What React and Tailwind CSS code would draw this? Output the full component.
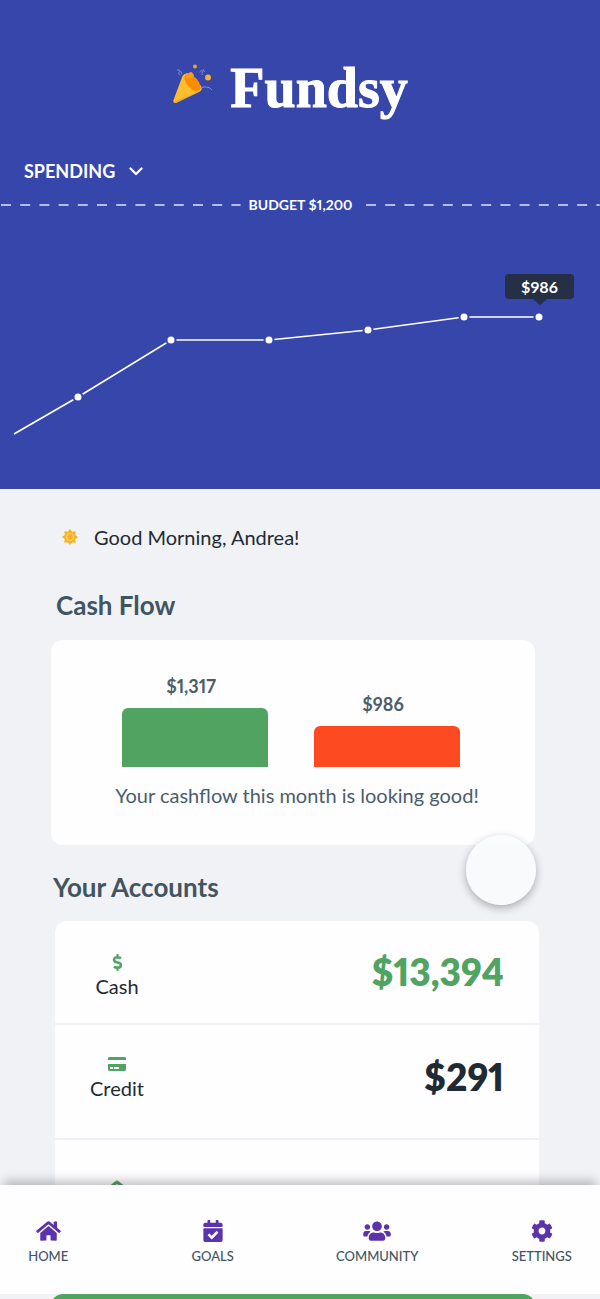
import React from "react";
import {
  FaHome,
  FaCalendarCheck,
  FaUsers,
  FaCog,
  FaDollarSign,
  FaCreditCard,
} from "react-icons/fa";

const points = [
  [14, 219],
  [78, 182],
  [171, 125],
  [269, 125],
  [368, 115],
  [464, 102],
  [539, 102],
];

const navItems = [
  { label: "HOME", Icon: FaHome, size: "w-[25px]" },
  { label: "GOALS", Icon: FaCalendarCheck, size: "w-5" },
  { label: "COMMUNITY", Icon: FaUsers, size: "w-7" },
  { label: "SETTINGS", Icon: FaCog, size: "w-[22px]" },
];

function PartyPopper() {
  return (
    <svg viewBox="0 0 42 42" className="size-[42px]" aria-hidden="true">
      <path d="M1.500 36 L10.500 12 Q13 8.500 18 10 L29 22 Q31 25 28 27.500 L4 39 Q0.500 39.500 1.500 36Z" fill="#fdbd2c" />
      <path d="M2.500 38 L28 27 L4 39Z" fill="#d9a63c" />
      <ellipse cx="20.500" cy="18.500" rx="5.500" ry="10.500" transform="rotate(-42 20.500 18.500)" fill="#fb8c00" />
      <path d="M13 11 q1 -3 3.500 -1.500 q3 -3 4.500 0.500 q2 1 0 3 L15 15Z" fill="#f9a01b" />
      <circle cx="23" cy="2.500" r="2" fill="#f9a01b" />
      <circle cx="36" cy="13.500" r="3" fill="#f9b02b" />
      <path d="M5 6 q3 -1 2.500 1.500 q-2 3 1 3.500 M8.500 7 l1.500 3 M27.500 8 q3 -3 3 0 q-2 3 0.500 2.500 M31 5 l1.500 3 M28.500 24 q3 -1.500 6 -1 q3 0 5.500 3" fill="none" stroke="#858dc9" strokeWidth="1" />
    </svg>
  );
}

function Sun() {
  return (
    <svg viewBox="0 0 32 32" className="size-4" aria-hidden="true">
      <g fill="#fbb01c">
        <path d="M16 0 L20.500 6 H11.500Z" />
        <path d="M16 0 L20.500 6 H11.500Z" transform="rotate(45 16 16)" />
        <path d="M16 0 L20.500 6 H11.500Z" transform="rotate(90 16 16)" />
        <path d="M16 0 L20.500 6 H11.500Z" transform="rotate(135 16 16)" />
        <path d="M16 0 L20.500 6 H11.500Z" transform="rotate(180 16 16)" />
        <path d="M16 0 L20.500 6 H11.500Z" transform="rotate(225 16 16)" />
        <path d="M16 0 L20.500 6 H11.500Z" transform="rotate(270 16 16)" />
        <path d="M16 0 L20.500 6 H11.500Z" transform="rotate(315 16 16)" />
        <circle cx="16" cy="16" r="11" />
      </g>
      <circle cx="16" cy="16" r="7" fill="#fbb01c" stroke="#fde3a0" strokeWidth="1.800" />
    </svg>
  );
}

function HouseOutline() {
  return (
    <svg viewBox="0 0 18 18" className="size-[18px]" aria-hidden="true">
      <path d="M2 7.500 L9 2 L16 7.500 V16 H2Z" fill="none" stroke="currentColor" strokeWidth="3" strokeLinejoin="round" />
    </svg>
  );
}

function Dashes({ className }) {
  return (
    <svg className={className} height="2" aria-hidden="true">
      <line x1="0" y1="1" x2="100%" y2="1" stroke="#dfe2f6" strokeWidth="1.500" strokeDasharray="10 9.200" />
    </svg>
  );
}

function SpendingChart() {
  return (
    <div className="relative">
      <svg viewBox="0 0 600 274" className="block w-full" role="img" aria-label="Spending over time">
        <polyline points={points.map((p) => p.join(",")).join(" ")} fill="none" stroke="#fff" strokeWidth="1.700" />
        {points.slice(1).map(([x, y]) => (
          <circle key={x} cx={x} cy={y} r="4.500" fill="#fff" stroke="#3646ab" strokeWidth="2" />
        ))}
      </svg>
      <div className="absolute top-[59px] right-[26px] flex h-[25px] w-[69px] items-center justify-center rounded bg-[#252f45] text-base font-bold text-white">
        $986
        <span className="absolute top-full left-1/2 -translate-x-1/2 border-x-[7px] border-t-[6px] border-x-transparent border-t-[#252f45]" />
      </div>
    </div>
  );
}

function Account({ icon, label, amount, className }) {
  return (
    <li className={"flex items-start justify-between border-t-2 border-[#f0f1f4] pr-[35px] pl-5 first:border-t-0 " + className}>
      <div className="flex w-[84px] flex-col items-center gap-px text-xl leading-7 text-[#1f2a33]">
        <span className="text-[#51a362]">{icon}</span>
        {label}
      </div>
      {amount}
    </li>
  );
}

export default function App() {
  return (
    <div className="relative h-screen overflow-hidden bg-[#f0f2f6] font-[Lato,sans-serif] proportional-nums">
      <div className="h-full overflow-y-auto [scrollbar-width:none]">
        <header className="bg-[#3646ab] text-white">
          <div className="flex items-start justify-center gap-4 pt-16 pr-5">
            <PartyPopper />
            <h1 className="font-['Liberation_Serif',serif] text-[56px] leading-[48px] font-bold [-webkit-text-stroke:1px_white]">Fundsy</h1>
          </div>
          <div className="mt-[45px] flex items-center pl-6">
            <div className="relative flex items-center">
              <select aria-label="Chart" className="w-[124px] appearance-none bg-transparent text-lg leading-7 font-bold">
                <option>SPENDING</option>
              </select>
              <svg viewBox="0 0 14 9" className="pointer-events-none absolute right-[5px] h-[9px] w-3.5" aria-hidden="true">
                <path d="M1.500 1.500 L7 7 L12.500 1.500" fill="none" stroke="#fff" strokeWidth="2.300" strokeLinecap="round" strokeLinejoin="round" />
              </svg>
            </div>
          </div>
          <div className="mt-2.5 flex items-center pl-px">
            <Dashes className="w-2/5" />
            <span className="pr-3.5 pl-2 text-sm leading-5 font-bold whitespace-nowrap">BUDGET $1,200</span>
            <Dashes className="w-0 flex-1" />
          </div>
          <SpendingChart />
        </header>

        <main>
          <p className="flex items-center gap-4 pt-8 pl-[62px] text-xl leading-8 text-[#1f2a33]">
            <Sun />
            Good Morning, Andrea!
          </p>

          <section className="mr-[65px] ml-[51px]">
            <h2 className="mt-9 ml-[5px] text-[26px] leading-8 font-bold text-[#42545f]">Cash Flow</h2>
            <div className="mt-[19px] rounded-xl bg-[#fefdff] pt-8 pb-[34px] text-[#4a5d6b]">
              <div className="flex items-end gap-[46px] pr-[75px] pl-[71px] text-center text-lg leading-7 font-bold">
                <div className="flex-1">
                  <span className="pr-2">$1,317</span>
                  <div className="mt-2 h-[59px] rounded-t-md bg-[#51a362]" />
                </div>
                <div className="flex-1">
                  <span className="pr-2">$986</span>
                  <div className="mt-2 h-[41px] rounded-t-md bg-[#fd4a20]" />
                </div>
              </div>
              <p className="mt-3 pl-2 text-center text-xl leading-8 whitespace-nowrap">Your cashflow this month is looking good!</p>
            </div>
          </section>

          <section className="mr-[61px] ml-[55px]">
            <h2 className="mt-[26px] -ml-0.5 text-[26px] leading-8 font-bold text-[#42545f]">Your Accounts</h2>
            <ul className="mt-[18px] rounded-xl bg-[#fefdff]">
              <Account
                className="h-[102px] pt-[33px]"
                icon={<FaDollarSign size={17} />}
                label="Cash"
                amount={<strong className="text-[37px] leading-9 font-extrabold text-[#51a362]">$13,394</strong>}
              />
              <Account
                className="h-[115px] pt-[30px]"
                icon={<FaCreditCard size={18} />}
                label="Credit"
                amount={<strong className="pt-1 text-[37px] leading-9 font-extrabold text-[#1f2a33]">$291</strong>}
              />
              <Account
                className="h-[120px] pt-10"
                icon={<HouseOutline />}
                label=""
              />
            </ul>
          </section>

          <section className="mr-[65px] mb-32 ml-[51px]">
            <button aria-label="Add account" className="mt-9 block h-14 w-full rounded-xl bg-[#51a362]" />
          </section>
        </main>
      </div>

      <div className="absolute top-[835px] right-16 size-[70px] rounded-full bg-[#fafbfd]/90 shadow-[0_3px_8px_rgba(0,0,0,0.3)]" />

      <nav className="absolute inset-x-0 bottom-[5px] h-[109px] bg-[#fefdff] pt-[35px] shadow-[0_-8px_10px_-4px_rgba(0,0,0,0.25)]">
        <div className="-mr-6 -ml-[34px] grid grid-cols-4">
          {navItems.map(({ label, Icon, size }) => (
            <a key={label} href={"#" + label.toLowerCase()} className="flex flex-col items-center gap-1 text-[13px] leading-5 font-medium text-[#42545f]">
              <Icon className={"h-[22px] text-[#5b34ab] " + size} />
              {label}
            </a>
          ))}
        </div>
      </nav>
    </div>
  );
}
